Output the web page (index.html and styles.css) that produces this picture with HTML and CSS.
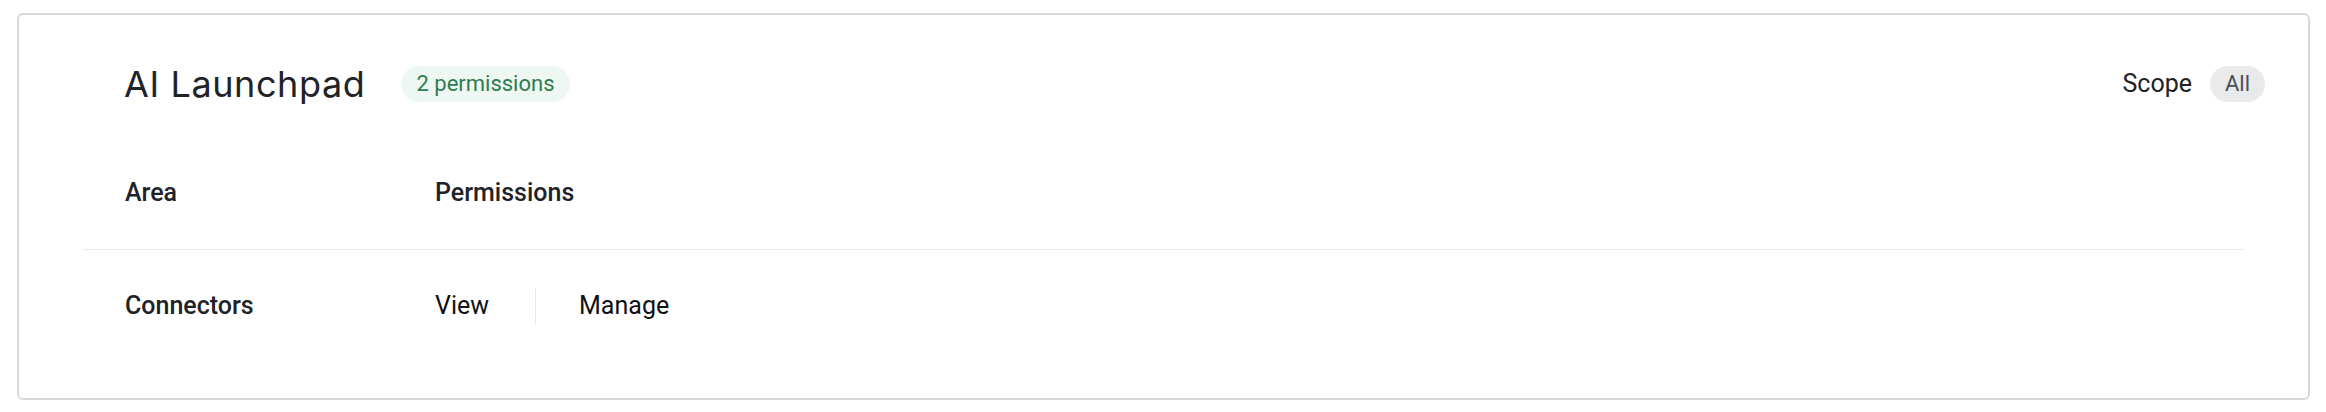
FILE: index.html
```html
<!DOCTYPE html>
<html lang="en">
<head>
    <meta charset="UTF-8">
    <meta name="viewport" content="width=device-width, initial-scale=1.0">
    <title>AI Launchpad - Permissions</title>
    <link rel="stylesheet" href="styles.css">
</head>
<body>

    <div class="card">
        <div class="card-header">
            <div class="title-group">
                <h1 class="title">AI Launchpad</h1>
                <span class="badge badge-green">2 permissions</span>
            </div>
            <div class="scope">
                <span class="scope-label">Scope</span>
                <span class="badge badge-gray">All</span>
            </div>
        </div>

        <div class="perm-table">
            <div class="perm-row perm-head">
                <div class="cell-area">Area</div>
                <div class="cell-perms">Permissions</div>
            </div>
            <div class="perm-row">
                <div class="cell-area">Connectors</div>
                <div class="cell-perms">
                    <span class="perm">View</span>
                    <span class="perm">Manage</span>
                </div>
            </div>
        </div>
    </div>

</body>
</html>
```

FILE: styles.css
```css
body {
    font-family: Roboto, "Liberation Sans", Arial, sans-serif;
    margin: 0;
    padding: 13px 16px 14px 17px;
    background-color: #fff;
    color: #202124;
}

.card {
    border: 2px solid #d6d9dd;
    border-radius: 6px;
    padding-bottom: 36px;
}

.card-header {
    display: flex;
    align-items: center;
    justify-content: space-between;
    padding: 51px 43px 0 105px;
}

.title-group {
    display: flex;
    align-items: center;
    gap: 36px;
}

.title {
    margin: 0;
    font-family: Inter, Roboto, sans-serif;
    font-size: 36px;
    font-weight: 400;
    line-height: 36px;
    letter-spacing: 0.6px;
    color: #1f2328;
}

.badge {
    display: inline-block;
    height: 36px;
    line-height: 36px;
    padding: 0 15px;
    border-radius: 18px;
    font-size: 22px;
}

.badge-green {
    background-color: #eef7f2;
    color: #2f7d4f;
}

.badge-gray {
    background-color: #e9eaec;
    color: #4a4f57;
}

.scope {
    display: flex;
    align-items: center;
    gap: 18px;
}

.scope-label {
    font-size: 25px;
    line-height: 36px;
    color: #202124;
}

.perm-table {
    margin: 35px 64px 0;
}

.perm-row {
    display: grid;
    grid-template-columns: 310px 1fr;
    padding: 38px 0 38px 42px;
    font-size: 25px;
    line-height: 36px;
}

.perm-head {
    border-bottom: 1px solid #e7e8ea;
}

.cell-area {
    font-weight: 500;
    color: #1f2329;
}

.perm-head .cell-perms {
    font-weight: 500;
    color: #1f2329;
}

.cell-perms {
    display: flex;
}

.perm {
    color: #111;
    padding-right: 46px;
}

.perm + .perm {
    border-left: 1px solid #e5e7ea;
    padding-left: 43px;
}
```
